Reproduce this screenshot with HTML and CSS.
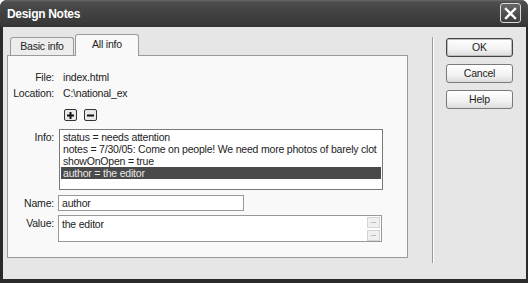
FILE: index.html
```html
<!DOCTYPE html>
<html>
<head>
<meta charset="utf-8">
<link rel="stylesheet" href="styles.css">
</head>
<body>
<div class="window">
  <div class="titlebar">
    <span class="title">Design Notes</span>
    <div class="close"><svg width="13" height="13" viewBox="0 0 13 13"><path d="M2 2 L11 11 M11 2 L2 11" stroke="#fff" stroke-width="2.4" stroke-linecap="square"/></svg></div>
  </div>
  <div class="content">
    <div class="main">
      <div class="tabs">
        <div class="tab">Basic info</div>
        <div class="tab active">All info</div>
      </div>
      <div class="panel">
        <div class="row text-row">
          <div class="label">File:</div>
          <div class="value">index.html</div>
        </div>
        <div class="row text-row">
          <div class="label">Location:</div>
          <div class="value">C:\national_ex</div>
        </div>
        <div class="row icon-row">
          <div></div>
          <div class="icons">
            <div class="icon-btn"><svg width="9" height="9" viewBox="0 0 9 9"><path d="M4.5 1 V8 M1 4.5 H8" stroke="#111" stroke-width="2"/></svg></div>
            <div class="icon-btn"><svg width="9" height="9" viewBox="0 0 9 9"><path d="M1 4.5 H8" stroke="#111" stroke-width="2"/></svg></div>
          </div>
        </div>
        <div class="row info-row">
          <div class="label">Info:</div>
          <div class="listbox">
            <div class="item">status = needs attention</div>
            <div class="item">notes = 7/30/05: Come on people! We need more photos of barely clot</div>
            <div class="item">showOnOpen = true</div>
            <div class="item selected">author = the editor</div>
          </div>
        </div>
        <div class="row name-row">
          <div class="label">Name:</div>
          <div class="input">author</div>
        </div>
        <div class="row value-row">
          <div class="label">Value:</div>
          <div class="textarea">
            <div class="ta-text">the editor</div>
            <div class="ta-scroll">
              <div class="sb"></div>
              <div class="sb"></div>
            </div>
          </div>
        </div>
      </div>
    </div>
    <div class="sep"></div>
    <div class="buttons">
      <div class="btn default">OK</div>
      <div class="btn">Cancel</div>
      <div class="btn">Help</div>
    </div>
  </div>
</div>
</body>
</html>
```

FILE: styles.css
```css
html, body {
  margin: 0;
  padding: 0;
}
body {
  width: 528px;
  height: 283px;
  overflow: hidden;
  background: #fff;
  font-family: "Liberation Sans", sans-serif;
  font-size: 10.5px;
  letter-spacing: -0.2px;
  color: #222;
}
.window {
  width: 528px;
  height: 283px;
  display: flex;
  flex-direction: column;
  background: #2a2a2a;
  border-radius: 7px 7px 0 0;
  overflow: hidden;
}
.titlebar {
  height: 27px;
  flex: none;
  display: flex;
  align-items: center;
  justify-content: space-between;
  padding: 0 7px 0 7px;
  background: linear-gradient(#6a6a6a 0px, #4e4e4e 2px, #444 10px, #3a3a3a 22px, #333 27px);
}
.title {
  font-family: "Liberation Sans", sans-serif;
  font-weight: bold;
  font-size: 12px;
  letter-spacing: -0.3px;
  color: #fff;
}
.close {
  width: 19px;
  height: 18px;
  border: 1px solid #d8d8d8;
  border-radius: 3px;
  background: linear-gradient(#666, #3d3d3d);
  display: flex;
  align-items: center;
  justify-content: center;
  margin-top: -1px;
}
.content {
  flex: 1;
  margin: 0 2px 4px 3px;
  background: #e6e6e6;
  display: flex;
  padding: 8px 0 0 4px;
}
.main {
  width: 401px;
  display: flex;
  flex-direction: column;
}
.tabs {
  display: flex;
  padding-left: 3px;
  height: 20px;
  align-items: flex-end;
  position: relative;
  z-index: 1;
}
.tab {
  width: 62px;
  height: 17px;
  border: 1px solid #9a9a9a;
  border-bottom: none;
  border-radius: 3px 3px 0 0;
  background: #ededed;
  text-align: center;
  line-height: 17px;
  color: #222;
}
.tab.active {
  line-height: 19px;
  background: #f9f9f9;
  margin-left: 1px;
  margin-bottom: -1px;
  height: 21px;
}
.panel {
  border: 1px solid #9a9a9a;
  background: #f9f9f9;
  height: 188px;
  padding-top: 13px;
  box-sizing: content-box;
  display: flex;
  flex-direction: column;
}
.row {
  display: grid;
  grid-template-columns: 46px 324px;
  column-gap: 4px;
}
.label {
  text-align: right;
  line-height: 16px;
  color: #222;
}
.text-row {
  height: 16px;
  line-height: 16px;
}
.value {
  padding-left: 5px;
}
.icon-row {
  margin-top: 8px;
  height: 12px;
}
.icons {
  display: flex;
  gap: 7px;
  padding-left: 6px;
}
.icon-btn {
  width: 11px;
  height: 10px;
  border: 1px solid #333;
  border-radius: 2px;
  background: #e8e8e8;
  display: flex;
  align-items: center;
  justify-content: center;
}
.info-row {
  margin-top: 8px;
}
.listbox {
  height: 58px;
  border: 1px solid #7a7a7a;
  background: #fff;
  padding: 1px 1px 0 1px;
  box-sizing: content-box;
  width: 320px;
  margin-left: 1px;
  overflow: hidden;
}
.item {
  height: 12px;
  line-height: 12px;
  padding-left: 2px;
  white-space: nowrap;
  overflow: hidden;
}
.item.selected {
  background: #4a4a4a;
  color: #e8e8e8;
}
.name-row {
  margin-top: 5px;
}
.input {
  width: 181px;
  height: 14px;
  border: 1px solid #999;
  background: #fff;
  line-height: 14px;
  padding-left: 3px;
}
.value-row {
  margin-top: 4px;
}
.textarea {
  height: 25px;
  border: 1px solid #999;
  background: #fff;
  display: flex;
}
.ta-text {
  flex: 1;
  padding: 2px 0 0 3px;
  line-height: 12px;
}
.ta-scroll {
  display: flex;
  flex-direction: column;
  gap: 2px;
  padding: 1px 1px 0 0;
}
.sb {
  width: 11px;
  height: 9px;
  border: 1px solid #d4d4d4;
  background: #f0f0f0;
  position: relative;
}
.sb::after {
  content: "";
  position: absolute;
  left: 3px;
  top: 4px;
  width: 5px;
  height: 1px;
  background: #bbb;
}
.sep {
  width: 1px;
  height: 226px;
  margin: 2px 0 0 24px;
  background: #9a9a9a;
  border-right: 1px solid #fff;
}
.buttons {
  margin: 3px 0 0 12px;
  display: flex;
  flex-direction: column;
  gap: 7px;
}
.btn {
  width: 65px;
  height: 17px;
  border: 1px solid #7a7a7a;
  border-radius: 3px;
  background: linear-gradient(#ffffff, #f2f2f2 60%, #dcdcdc);
  text-align: center;
  line-height: 17px;
  color: #222;
}
.btn.default {
  border-color: #444;
  box-shadow: inset 0 0 0 1px #bcbcbc;
}
```
